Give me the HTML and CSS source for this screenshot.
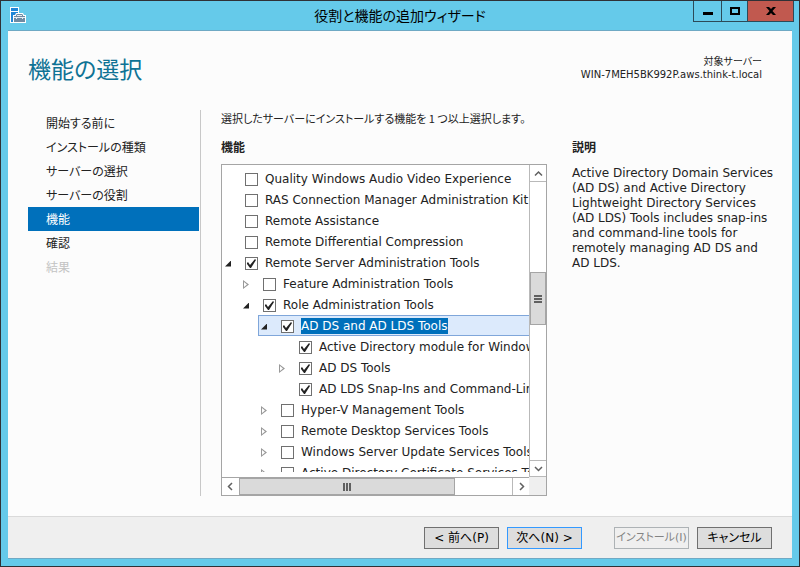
FILE: index.html
```html
<!DOCTYPE html>
<html lang="ja">
<head>
<meta charset="utf-8">
<title>役割と機能の追加ウィザード</title>
<link rel="stylesheet" href="styles.css">
</head>
<body>
<div class="window">
  <header class="titlebar">
    <svg class="app-icon" width="16" height="16" viewBox="0 0 16 16" aria-hidden="true">
      <path d="M0 0h9v6h4l1 2h2v8H0z" fill="#fff"/>
      <path d="M1 1h7v3H1zM1 5h7v1H6L5 8H3v7H1z" fill="#1f86d6"/>
      <path d="M4 9h11v6H4zM6 8l1-1h5l1 1v1H6z" fill="#6f8ba3"/>
      <path d="M7 8h5v1H7zM4 10h11v1H4zM6 10h1v2H6zM12 10h1v2h-1z" fill="#e8eef3"/>
    </svg>
    <span class="caption">役割と機能の追加ウィザード</span>
    <div class="window-buttons">
      <button class="win-btn" type="button" aria-label="最小化"><svg width="10" height="8" viewBox="0 0 10 8"><path d="M0 5h10v3H0z"/></svg></button>
      <button class="win-btn win-max" type="button" aria-label="最大化"><svg width="10" height="8" viewBox="0 0 10 8"><path fill-rule="evenodd" d="M0 0h10v8H0zM2 2v4h6V2z"/></svg></button>
      <button class="win-btn win-close" type="button" aria-label="閉じる"><svg width="10" height="8" viewBox="0 0 10 8"><path d="M0 0h3l2 2 2-2h3L6.500 4 10 8H7L5 6 3 8H0l3.500-4z"/></svg></button>
    </div>
  </header>

  <div class="client">
    <div class="page-head">
      <h1>機能の選択</h1>
      <div class="target">
        <div>対象サーバー</div>
        <div>WIN-7MEH5BK992P.aws.think-t.local</div>
      </div>
    </div>

    <div class="columns">
      <nav class="steps">
        <a href="#before">開始する前に</a>
        <a href="#type">インストールの種類</a>
        <a href="#server">サーバーの選択</a>
        <a href="#roles">サーバーの役割</a>
        <a href="#features" class="current" aria-current="step">機能</a>
        <a href="#confirm">確認</a>
        <a class="disabled" aria-disabled="true">結果</a>
      </nav>

      <main class="features">
        <p class="intro">選択したサーバーにインストールする機能を 1 つ以上選択します。</p>
        <h2>機能</h2>
        <div class="listbox">
          <div class="tree">
            <div class="row"><span class="twisty"></span><label><input type="checkbox"><span>Quality Windows Audio Video Experience</span></label></div>
            <div class="row"><span class="twisty"></span><label><input type="checkbox"><span>RAS Connection Manager Administration Kit (CMAK)</span></label></div>
            <div class="row"><span class="twisty"></span><label><input type="checkbox"><span>Remote Assistance</span></label></div>
            <div class="row"><span class="twisty"></span><label><input type="checkbox"><span>Remote Differential Compression</span></label></div>
            <div class="row"><span class="twisty open"></span><label><input type="checkbox" checked><span>Remote Server Administration Tools</span></label></div>
            <div class="group">
              <div class="row"><span class="twisty closed"></span><label><input type="checkbox"><span>Feature Administration Tools</span></label></div>
              <div class="row"><span class="twisty open"></span><label><input type="checkbox" checked><span>Role Administration Tools</span></label></div>
              <div class="group">
                <div class="row selected"><span class="twisty open"></span><label><input type="checkbox" checked><span>AD DS and AD LDS Tools</span></label></div>
                <div class="group">
                  <div class="row"><span class="twisty"></span><label><input type="checkbox" checked><span>Active Directory module for Windows PowerShell</span></label></div>
                  <div class="row"><span class="twisty closed"></span><label><input type="checkbox" checked><span>AD DS Tools</span></label></div>
                  <div class="row"><span class="twisty"></span><label><input type="checkbox" checked><span>AD LDS Snap-Ins and Command-Line Tools</span></label></div>
                </div>
                <div class="row"><span class="twisty closed"></span><label><input type="checkbox"><span>Hyper-V Management Tools</span></label></div>
                <div class="row"><span class="twisty closed"></span><label><input type="checkbox"><span>Remote Desktop Services Tools</span></label></div>
                <div class="row"><span class="twisty closed"></span><label><input type="checkbox"><span>Windows Server Update Services Tools</span></label></div>
                <div class="row"><span class="twisty closed"></span><label><input type="checkbox"><span>Active Directory Certificate Services Tools</span></label></div>
              </div>
            </div>
          </div>
          <div class="scroll vertical">
            <button type="button" aria-label="上へ"><svg width="9" height="9" viewBox="0 0 9 9"><path d="M1 6.500 4.500 3 8 6.500"/></svg></button>
            <div class="track"><div class="thumb"><i></i><i></i><i></i></div></div>
            <button type="button" aria-label="下へ"><svg width="9" height="9" viewBox="0 0 9 9"><path d="M1 3 4.500 6.500 8 3"/></svg></button>
          </div>
          <div class="scroll horizontal">
            <button type="button" aria-label="左へ"><svg width="9" height="9" viewBox="0 0 9 9"><path d="M6 1 2.500 4.500 6 8"/></svg></button>
            <div class="track"><div class="thumb"><i></i><i></i><i></i></div></div>
            <button type="button" aria-label="右へ"><svg width="9" height="9" viewBox="0 0 9 9"><path d="M3 1 6.500 4.500 3 8"/></svg></button>
          </div>
          <div class="corner"></div>
        </div>
      </main>

      <aside class="description">
        <h2>説明</h2>
        <p>Active Directory Domain Services (AD DS) and Active Directory Lightweight Directory Services (AD LDS) Tools includes snap-ins and command-line tools for remotely managing AD DS and AD LDS.</p>
      </aside>
    </div>

    <footer class="actions">
      <button type="button">&lt; 前へ(P)</button>
      <button type="button" class="default">次へ(N) &gt;</button>
      <button type="button" class="install" disabled>インストール(I)</button>
      <button type="button">キャンセル</button>
    </footer>
  </div>
</div>
</body>
</html>
```
FILE: styles.css
```css
* { box-sizing: border-box; }

body {
  margin: 0;
  font-family: "DejaVu Sans", "Noto Sans CJK JP", sans-serif;
  font-size: 12px;
  line-height: 16px;
  font-feature-settings: "palt";
  color: #222;
}

h1, h2, p { margin: 0; }

.caption, .steps, .intro, h1, h2 {
  font-family: "Noto Sans CJK JP", sans-serif;
}

button {
  font: inherit;
  font-feature-settings: inherit;
  padding: 0;
  border-radius: 0;
}

.window {
  display: flex;
  flex-direction: column;
  height: 100vh;
  min-height: 400px;
  padding: 0 7px 7px;
  border: 1px solid #2f3136;
  background: #65caea;
}

/* Title bar */
.titlebar {
  display: grid;
  grid-template-columns: 1fr auto 1fr;
  height: 29px;
  flex: none;
}

.app-icon { margin: 6px 0 0 2px; }

.caption {
  font-size: 14px;
  line-height: 28px;
  color: #000;
}

.window-buttons {
  display: flex;
  justify-self: end;
  height: 21px;
  margin-right: -2px;
  border: 1px solid #2c4a58;
  border-top: 0;
}

.win-btn {
  display: grid;
  place-items: center;
  width: 28px;
  border: 0;
  border-right: 1px solid #2c4a58;
  background: none;
}

.win-max { width: 26px; }

.win-close {
  width: 45px;
  border-right: 0;
  background: #c1594f;
}

/* Client area */
.client {
  display: flex;
  flex-direction: column;
  flex: 1;
  min-height: 0;
  border-top: 1px solid #6fa9c4;
  border-bottom: 1px solid #6fa9c4;
  background: #fcfcfc;
}

.page-head {
  display: flex;
  justify-content: space-between;
  height: 79px;
  padding: 24px 30px 0 20px;
}

h1 {
  font-size: 23px;
  font-weight: 400;
  line-height: 26px;
  color: #0f7395;
}

.target {
  font-size: 10px;
  line-height: 13px;
  text-align: right;
}

.columns {
  display: flex;
  flex: 1;
  min-height: 0;
  padding: 0 16px 20px 20px;
}

/* Wizard steps */
.steps {
  flex: none;
  width: 173px;
  padding: 1px 1px 0 0;
  border-right: 1px solid #c8c8c8;
}

.steps a {
  display: block;
  padding-left: 18px;
  line-height: 24px;
  color: #222;
  text-decoration: none;
}

.steps .current { background: #0070bb; color: #fff; }
.steps .disabled { color: #c3c3c3; }

/* Feature list */
.features {
  display: flex;
  flex-direction: column;
  flex: 1;
  min-width: 0;
  margin: 0 25px 0 20px;
}

.intro {
  font-size: 11px;
  white-space: nowrap;
}

h2 {
  font-size: 12px;
  font-weight: 700;
  line-height: 16px;
}

.features h2 { margin: 13px 0 9px; }

.listbox {
  display: grid;
  grid-template: minmax(0, 1fr) 18px / minmax(0, 1fr) 17px;
  flex: 1;
  min-height: 0;
  border: 1px solid #a5a5a5;
  background: #fff;
}

.tree {
  overflow: hidden;
  margin-bottom: 5px;
  padding-top: 3px;
}

.group { padding-left: 18px; }

.row {
  display: flex;
  align-items: center;
  height: 21px;
  border: 1px solid transparent;
  border-right: 0;
  white-space: nowrap;
}

.row label { display: flex; align-items: center; }

.selected { border-color: #7fa6da; background: #dceafc; }
.selected label span { background: #0070bb; color: #fff; }

.twisty { flex: none; width: 22px; padding: 2px 0 0 2px; }
.twisty::before { content: ""; display: block; }

.open::before {
  width: 6px;
  height: 6px;
  background: #222;
  clip-path: polygon(100% 0, 100% 100%, 0 100%);
}

.closed::before {
  width: 6px;
  height: 9px;
  background: #999;
  clip-path: polygon(0 0, 100% 50%, 0 100%, 0 0, 1px 2px, 1px 7px, 4px 50%, 1px 2px);
}

.row input {
  appearance: none;
  display: grid;
  place-items: center;
  width: 13px;
  height: 13px;
  margin: 2px 7px 0 0;
  border: 1px solid #707070;
  background: #fff;
}

.row input:checked::before {
  content: "";
  width: 9px;
  height: 9px;
  background: #222;
  clip-path: polygon(0 4px, 1px 3px, 3px 6px, 8px 0, 9px 1px, 4px 9px, 3px 9px, 0 5px);
}

/* Scroll bars */
.scroll { display: flex; background: #fff; }
.vertical { flex-direction: column; border-left: 1px solid #b9b9b9; }
.horizontal { border-top: 1px solid #a5a5a5; }

.scroll button {
  display: grid;
  place-items: center;
  flex: none;
  border: 0 solid #b9b9b9;
  background: #fff;
}

.scroll path { fill: none; stroke: #606060; stroke-width: 1.5; }

.vertical button { height: 17px; }
.vertical button:first-child { border-bottom-width: 1px; }
.vertical button:last-child { border-width: 1px 0; }
.horizontal button { width: 17px; }
.horizontal button:last-child { border-width: 0 0 0 1px; }

.track { display: flex; flex: 1; min-height: 0; }
.vertical .track { flex-direction: column; padding-top: 90px; }

.thumb {
  display: flex;
  align-items: center;
  justify-content: center;
  gap: 1px;
  border: 1px solid #a5a5a5;
  background: #dadada;
}

.vertical .thumb { flex-direction: column; height: 53px; }
.horizontal .thumb { width: 79%; }
.thumb i { width: 2px; height: 8px; background: #606060; }
.vertical .thumb i { width: 8px; height: 2px; }

.corner { background: #efefef; }

/* Description */
.description { flex: none; width: 204px; padding-top: 29px; }
.description p { margin-top: 11px; line-height: 15px; }

/* Footer buttons */
.actions {
  display: flex;
  justify-content: flex-end;
  gap: 8px;
  padding: 10px 20px 9px;
  border-top: 1px solid #dadada;
  background: #efefef;
}

.actions button {
  width: 75px;
  height: 22px;
  border: 1px solid #707070;
  background: #dddddd;
  color: #000;
  line-height: 20px;
  white-space: nowrap;
}

.actions .default { border-color: #3399ff; }

.actions .install {
  margin-left: 24px;
  border-color: #adb2b5;
  background: #efefef;
  color: #838383;
  font-size: 11px;
}
```
